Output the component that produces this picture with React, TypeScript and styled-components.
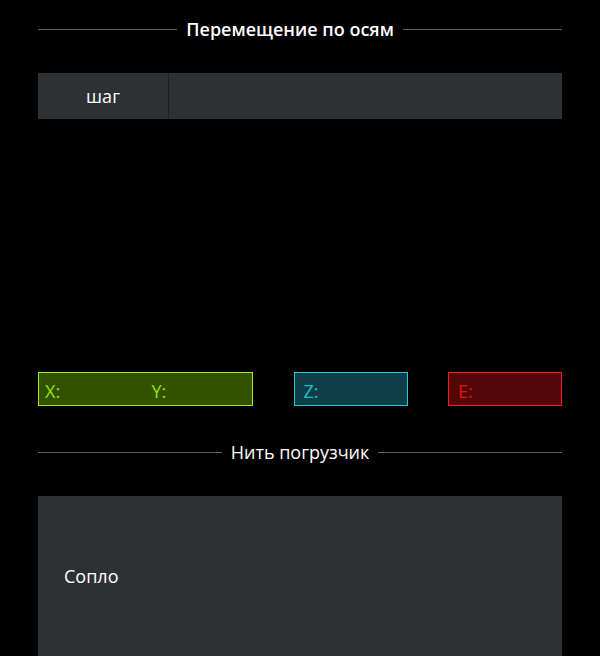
import React from "react";
import styled, { createGlobalStyle } from "styled-components";

const Global = createGlobalStyle`
  html, body { margin: 0; padding: 0; background: #000; }
  body { font-family: "Open Sans", "Noto Sans", sans-serif; color: #fff; }
`;

const Page = styled.div`
  width: 600px;
  height: 656px;
  overflow: hidden;
  box-sizing: border-box;
  padding: 18px 38px 0;
  display: flex;
  flex-direction: column;
`;

const SectionTitle = styled.div<{ $bold?: boolean; $top: number; $lead?: number; $trail?: number }>`
  display: flex;
  align-items: center;
  gap: 9px;
  height: 22px;
  line-height: 22px;
  margin-top: ${(p) => p.$top}px;
  font-size: 18px;
  font-weight: ${(p) => (p.$bold ? 600 : 400)};
  color: #fff;
  white-space: nowrap;
  &::before,
  &::after {
    content: "";
    height: 1px;
    background: #5a5d60;
  }
  &::before {
    flex: ${(p) => p.$lead ?? 1} 1 0;
  }
  &::after {
    flex: ${(p) => p.$trail ?? 1} 1 0;
  }
`;

const StepRow = styled.div`
  margin-top: 33px;
  height: 48px;
  display: flex;
  background: #2e3134;
`;

const StepLabel = styled.div`
  width: 130px;
  border-right: 1px solid #1c1e20;
  display: flex;
  align-items: center;
  justify-content: center;
  font-size: 18px;
  color: #fff;
`;

const StepValues = styled.div`
  flex: 1;
`;

const AxisRow = styled.div`
  margin-top: 253px;
  height: 34px;
  display: grid;
  grid-template-columns: 215px 114px 114px;
  justify-content: space-between;
`;

const AxisBox = styled.div<{ $border: string; $bg: string; $fg: string }>`
  box-sizing: border-box;
  height: 34px;
  border: 1px solid ${(p) => p.$border};
  background: ${(p) => p.$bg};
  color: ${(p) => p.$fg};
  display: flex;
  align-items: center;
  font-size: 18px;
  line-height: 22px;
  padding-top: 3px;
`;

const AxisCell = styled.div<{ $pad: number }>`
  flex: 1;
  padding-left: ${(p) => p.$pad}px;
`;

const Panel = styled.div`
  margin-top: 33px;
  height: 160px;
  flex-shrink: 0;
  background: #2e3134;
  display: flex;
  align-items: center;
  padding-left: 26px;
  font-size: 18px;
  color: #fff;
`;

export default function App() {
  return (
    <>
      <Global />
      <Page>
        <SectionTitle $bold $top={0} $lead={7} $trail={8}>
          Перемещение по осям
        </SectionTitle>
        <StepRow>
          <StepLabel>шаг</StepLabel>
          <StepValues />
        </StepRow>
        <AxisRow>
          <AxisBox $border="#a4ec12" $bg="#325200" $fg="#98e010">
            <AxisCell $pad={6}>X:</AxisCell>
            <AxisCell $pad={6}>Y:</AxisCell>
          </AxisBox>
          <AxisBox $border="#20c8da" $bg="#0e3e48" $fg="#1ec0d0">
            <AxisCell $pad={9}>Z:</AxisCell>
          </AxisBox>
          <AxisBox $border="#f81c1c" $bg="#520808" $fg="#e41414">
            <AxisCell $pad={9}>E:</AxisCell>
          </AxisBox>
        </AxisRow>
        <SectionTitle $top={35}>Нить погрузчик</SectionTitle>
        <Panel>Сопло</Panel>
      </Page>
    </>
  );
}
